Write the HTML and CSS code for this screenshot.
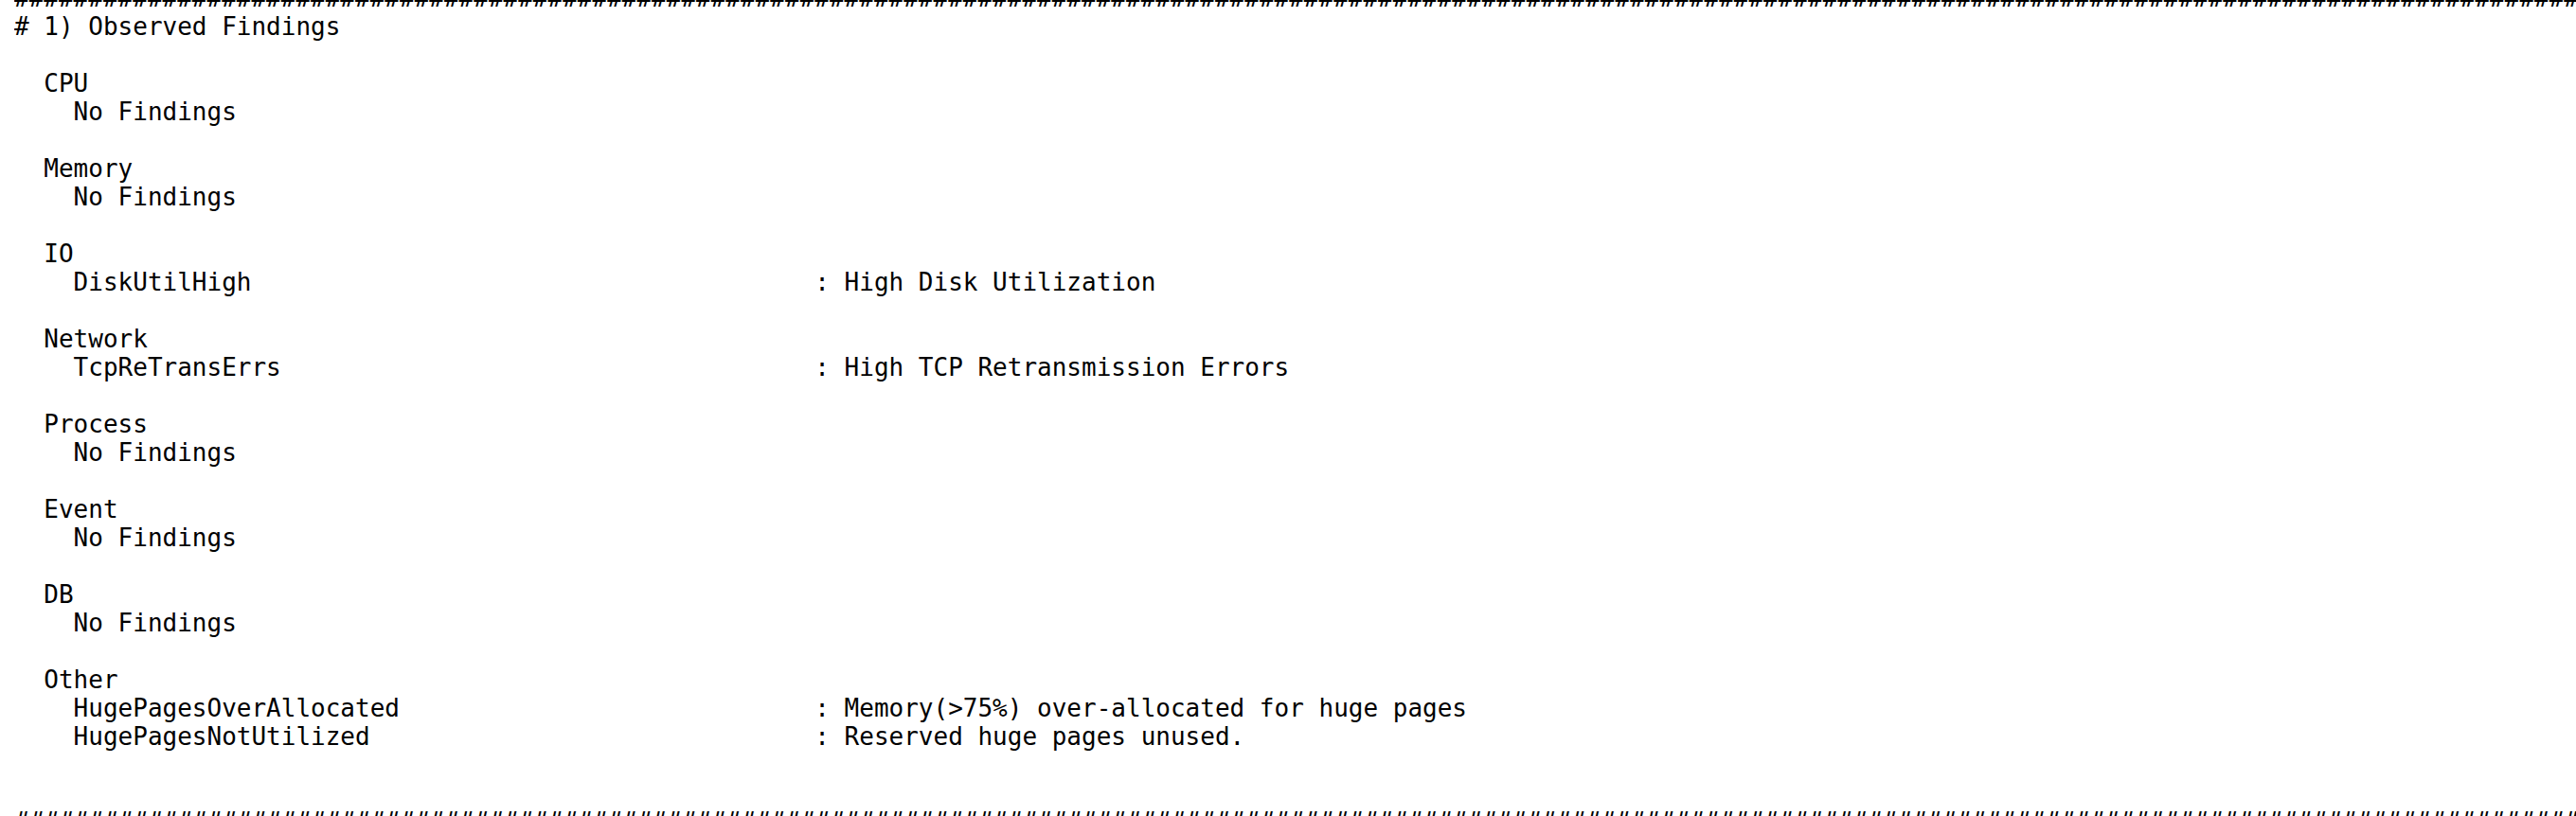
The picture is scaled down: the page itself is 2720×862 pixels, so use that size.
FILE: index.html
```html
<!DOCTYPE html>
<html lang="en">
<head>
<meta charset="utf-8">
<title>Observed Findings</title>
<link rel="stylesheet" href="styles.css">
</head>
<body>
<main class="term">
  <div class="line rule">####################################################################################################################################################################################</div>
  <h1 class="line title"># 1) Observed Findings</h1>

  <section class="group">
    <div class="line group-name">CPU</div>
    <div class="line finding">No Findings</div>
  </section>

  <section class="group">
    <div class="line group-name">Memory</div>
    <div class="line finding">No Findings</div>
  </section>

  <section class="group">
    <div class="line group-name">IO</div>
    <div class="line finding row"><span class="name">DiskUtilHigh</span><span class="desc">: High Disk Utilization</span></div>
  </section>

  <section class="group">
    <div class="line group-name">Network</div>
    <div class="line finding row"><span class="name">TcpReTransErrs</span><span class="desc">: High TCP Retransmission Errors</span></div>
  </section>

  <section class="group">
    <div class="line group-name">Process</div>
    <div class="line finding">No Findings</div>
  </section>

  <section class="group">
    <div class="line group-name">Event</div>
    <div class="line finding">No Findings</div>
  </section>

  <section class="group">
    <div class="line group-name">DB</div>
    <div class="line finding">No Findings</div>
  </section>

  <section class="group last">
    <div class="line group-name">Other</div>
    <div class="line finding row"><span class="name">HugePagesOverAllocated</span><span class="desc">: Memory(&gt;75%) over-allocated for huge pages</span></div>
    <div class="line finding row"><span class="name">HugePagesNotUtilized</span><span class="desc">: Reserved huge pages unused.</span></div>
  </section>

  <div class="line rule">####################################################################################################################################################################################</div>
</main>
</body>
</html>
```
FILE: styles.css
```css
html, body {
  margin: 0;
  padding: 0;
  background: #ffffff;
}

body {
  width: 2720px;
  height: 862px;
  overflow: hidden;
}

.term {
  margin-top: -17px;
  padding-left: 15px;
  font-family: "DejaVu Sans Mono", "Liberation Mono", monospace;
  font-size: 26px;
  line-height: 30px;
  color: #000000;
  display: flex;
  flex-direction: column;
}

.line {
  height: 30px;
  white-space: pre;
  overflow: hidden;
}

.title {
  margin: 0 0 30px 0;
  font-size: 26px;
  font-weight: normal;
}

.group {
  display: flex;
  flex-direction: column;
  margin-bottom: 30px;
}

.group.last {
  margin-bottom: 60px;
}

.group-name {
  padding-left: 2ch;
}

.finding {
  padding-left: 4ch;
}

.row {
  display: grid;
  grid-template-columns: 50ch auto;
  justify-content: start;
}

.rule {
  overflow: hidden;
}
```
